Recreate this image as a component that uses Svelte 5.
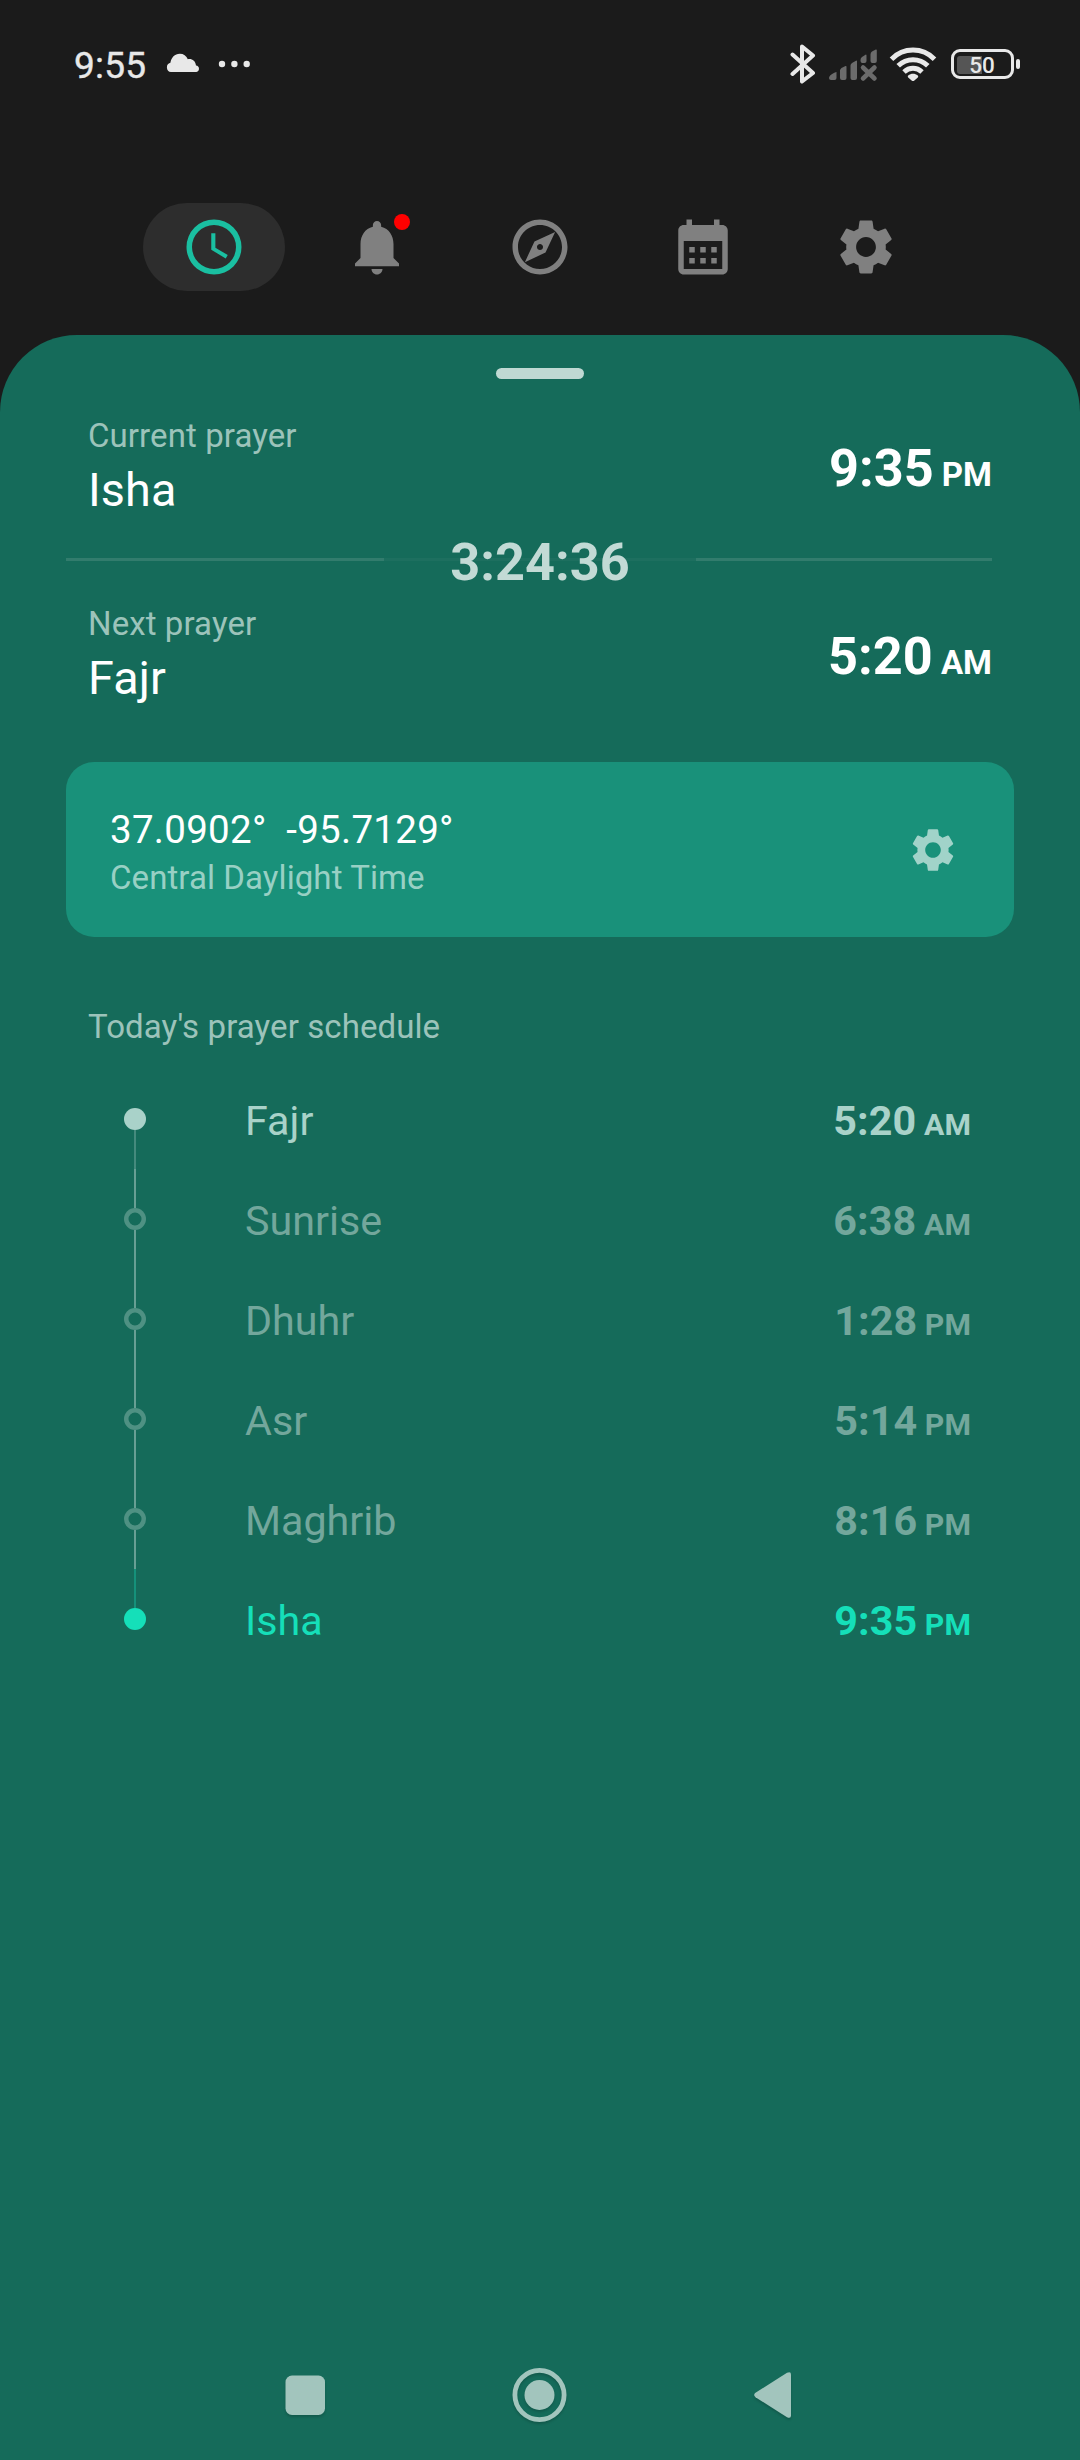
<script>
  const gear =
    'M19.14 12.94c.04-.3.06-.61.06-.94 0-.32-.02-.64-.07-.94l2.03-1.58c.18-.14.23-.41.12-.61l-1.92-3.32c-.12-.22-.37-.29-.59-.22l-2.39.96c-.5-.38-1.03-.7-1.62-.94L14.4 2.81c-.04-.24-.24-.41-.48-.41h-3.84c-.24 0-.43.17-.47.41L9.25 5.35C8.66 5.59 8.12 5.92 7.63 6.29L5.24 5.33c-.22-.08-.47 0-.59.22L2.74 8.87c-.12.21-.08.47.12.61l2.03 1.58C4.84 11.36 4.8 11.69 4.8 12s.02.64.07.94l-2.03 1.58c-.18.14-.23.41-.12.61l1.92 3.32c.12.22.37.29.59.22l2.39-.96c.5.38 1.03.7 1.62.94l.36 2.54c.05.24.24.41.48.41h3.84c.24 0 .44-.17.47-.41l.36-2.54c.59-.24 1.13-.56 1.62-.94l2.39.96c.22.08.47 0 .59-.22l1.92-3.32c.12-.22.07-.47-.12-.61l-2.01-1.58zM12 15.6c-1.98 0-3.6-1.62-3.6-3.6s1.62-3.6 3.6-3.6 3.6 1.62 3.6 3.6-1.62 3.6-3.6 3.6z';

  const tabs = [
    {
      id: 'times',
      active: true,
      icon: 'M12 20a8 8 0 0 0 8-8 8 8 0 0 0-8-8 8 8 0 0 0-8 8 8 8 0 0 0 8 8m0-18a10 10 0 0 1 10 10 10 10 0 0 1-10 10C6.47 22 2 17.5 2 12A10 10 0 0 1 12 2m.5 5v5.25l4.5 2.67-.75 1.23L11 13V7h1.5z'
    },
    {
      id: 'alerts',
      badge: true,
      icon: 'M12 22c1.1 0 2-.9 2-2h-4c0 1.1.89 2 2 2zm6-6v-5c0-3.07-1.64-5.64-4.5-6.32V4c0-.83-.67-1.5-1.5-1.5s-1.5.67-1.5 1.5v.68C7.63 5.36 6 7.92 6 11v5l-2 2v1h16v-1l-2-2z'
    },
    {
      id: 'qibla',
      icon: 'M12 2C6.48 2 2 6.48 2 12s4.48 10 10 10 10-4.48 10-10S17.52 2 12 2zm0 18c-4.41 0-8-3.59-8-8s3.59-8 8-8 8 3.59 8 8-3.59 8-8 8zm-5.5-2.5l7.51-3.49L17.5 6.5 9.99 9.99 6.5 17.5zm5.5-6.6c.61 0 1.1.49 1.1 1.1s-.49 1.1-1.1 1.1-1.1-.49-1.1-1.1.49-1.1 1.1-1.1z'
    },
    {
      id: 'calendar',
      icon: 'M19 4h-1V2h-2v2H8V2H6v2H5c-1.11 0-1.99.9-1.99 2L3 20c0 1.1.89 2 2 2h14c1.1 0 2-.9 2-2V6c0-1.1-.9-2-2-2zm0 16H5V9.8h14V20zM9 14H7v-2h2v2zm4 0h-2v-2h2v2zm4 0h-2v-2h2v2zm-8 4H7v-2h2v2zm4 0h-2v-2h2v2zm4 0h-2v-2h2v2z'
    },
    { id: 'settings', icon: gear }
  ];

  const summary = {
    current: { label: 'Current prayer', name: 'Isha', time: '9:35', period: 'PM' },
    next: { label: 'Next prayer', name: 'Fajr', time: '5:20', period: 'AM' }
  };

  const schedule = [
    { name: 'Fajr', time: '5:20', period: 'AM', state: 'next' },
    { name: 'Sunrise', time: '6:38', period: 'AM', state: 'idle' },
    { name: 'Dhuhr', time: '1:28', period: 'PM', state: 'idle' },
    { name: 'Asr', time: '5:14', period: 'PM', state: 'idle' },
    { name: 'Maghrib', time: '8:16', period: 'PM', state: 'idle' },
    { name: 'Isha', time: '9:35', period: 'PM', state: 'current' }
  ];
</script>

{#snippet prayer(p)}
  <div class="prayer">
    <div class="prayer-text">
      <span class="label">{p.label}</span>
      <span class="prayer-name">{p.name}</span>
    </div>
    <div class="prayer-time">{p.time}<small>&nbsp;{p.period}</small></div>
  </div>
{/snippet}

<div class="screen">
  <header class="status">
    <div class="status-left">
      <span class="clock">9:55</span>
      <svg class="cloud" width="34" height="20" viewBox="0 0 34 20">
        <path d="M5 19a4.7 4.7 0 0 1-.6-9.2C5.100 4.500 8.800.7 13.800.7c3.700 0 6.700 2 8 5.600 4-.9 7.700 1.600 8.200 6.200A3.300 3.300 0 0 1 30.400 19z" />
      </svg>
      <svg class="more" width="32" height="8" viewBox="0 0 32 8">
        <circle cx="4" cy="4" r="3.200" /><circle cx="16.400" cy="4" r="3.200" /><circle cx="28.700" cy="4" r="3.200" />
      </svg>
    </div>
    <div class="status-right">
      <svg width="26" height="40" viewBox="0 0 26 40">
        <path class="stroke" d="M2.500 10.500 23 29 12 37.500V2.500L23 11.500 2.500 30" />
      </svg>
      <svg class="signal" width="50" height="34" viewBox="0 0 50 34">
        <path d="M1 30.500c0-3 3-5 7.500-6.500v6q0 2-2 2h-3.500q-2 0-2-2zM12 22.500q0-1.500 1.500-2.500l4-2q1-.4 1 .8V30q0 2-2 2h-2.500q-2 0-2-2zM22.500 17.500q0-1.500 1.500-2.500l4-2.300q1-.4 1 .8V30q0 2-2 2h-2.500q-2 0-2-2zM32.500 12q0-2 1.500-3l3.500-2.300q1-.4 1 .8V13q0 2-2 2h-2q-2 0-2-2zM42.500 6.500q0-2 1.500-3l3.800-2q1-.4 1 .8V13q0 2-2 2h-2.300q-2 0-2-2z" />
        <path class="cross" d="M35 19.500 46.500 30.500M46.500 19.500 35 30.500" />
      </svg>
      <svg class="wifi" width="48" height="36" viewBox="0 0 48 36">
        <path class="arc" d="M2.500 13.200C14.500 1 33.500 1 45.500 13.200M9.200 19.800c8.400-8.200 21.200-8.200 29.600 0M15 26c5.300-4.900 12.700-4.900 18 0" />
        <path d="M19.200 29.500c2.800-2.200 6.800-2.200 9.600 0 .6.600.5 1.400 0 2l-3.400 3q-1.400 1-2.800 0l-3.400-3c-.5-.6-.6-1.400 0-2z" />
      </svg>
      <div class="battery">
        <span class="level"></span>
        <span class="percent">50</span>
      </div>
      <span class="battery-tip"></span>
    </div>
  </header>

  <nav class="tabs">
    {#each tabs as tab (tab.id)}
      <div class="tab" class:active={tab.active}>
        <svg width="66" height="66" viewBox="0 0 24 24"><path d={tab.icon} /></svg>
        {#if tab.badge}<span class="badge"></span>{/if}
      </div>
    {/each}
  </nav>

  <main class="sheet">
    <div class="handle"></div>

    <section class="summary">
      {@render prayer(summary.current)}
      <div class="divider">
        <span class="rule left"></span>
        <span class="countdown">3:24:36</span>
        <span class="rule right"></span>
      </div>
      {@render prayer(summary.next)}
    </section>

    <section class="location">
      <div class="location-text">
        <span class="coords">37.0902°&nbsp; -95.7129°</span>
        <span class="zone">Central Daylight Time</span>
      </div>
      <svg width="52" height="52" viewBox="0 0 24 24"><path d={gear} /></svg>
    </section>

    <h2>Today's prayer schedule</h2>
    <ul>
      {#each schedule as item (item.name)}
        <li class={item.state}>
          <span class="rail"><i class="line"></i><i class="dot"></i><i class="line"></i></span>
          <span class="name">{item.name}</span>
          <span class="time">{item.time}<small>&nbsp;{item.period}</small></span>
        </li>
      {/each}
    </ul>

    <footer>
      <svg width="594" height="60" viewBox="0 0 594 60">
        <rect x="42.500" y="10.500" width="39.500" height="39.500" rx="6.500" />
        <circle class="ring" cx="296.500" cy="30" r="24.600" />
        <circle cx="296.500" cy="30" r="15" />
        <path d="M512.500 27.800 544 7.800Q548 6 548 9.500V50.500Q548 54 544 52.200L512.500 32.200Q509.800 30 512.500 27.800z" />
      </svg>
    </footer>
  </main>
</div>

<style>
  :global(body) {
    margin: 0;
    background: #1b1b1b;
  }

  .screen {
    width: 1080px;
    height: 2460px;
    display: flex;
    flex-direction: column;
    overflow: hidden;
    background: #1b1b1b;
    font-family: Roboto, 'Noto Sans', sans-serif;
    color: #fff;
  }

  svg {
    display: block;
    flex: none;
    fill: currentColor;
  }

  .status {
    height: 128px;
    padding: 0 60px 0 74px;
    display: flex;
    justify-content: space-between;
    align-items: center;
    color: #e8e8e8;
  }

  .status-left,
  .status-right {
    display: flex;
    align-items: center;
  }

  .clock {
    width: 92px;
    font-size: 37px;
    font-weight: 400;
    line-height: 44px;
    letter-spacing: 0.2px;
    padding-top: 3px;
    -webkit-text-stroke: 0.4px currentColor;
  }

  .cloud {
    margin-top: -3px;
  }

  .more {
    margin-left: 18px;
  }

  .stroke {
    fill: none;
    stroke: currentColor;
    stroke-width: 4;
    stroke-linecap: round;
    stroke-linejoin: round;
  }

  .signal {
    margin-left: 12px;
    margin-top: 2px;
    color: #6b6b6b;
  }

  .cross {
    stroke: currentColor;
    stroke-width: 4.5;
    stroke-linecap: round;
  }

  .wifi {
    margin-left: 11px;
  }

  .arc {
    fill: none;
    stroke: currentColor;
    stroke-width: 5;
  }

  .battery {
    box-sizing: border-box;
    width: 63px;
    height: 30px;
    margin-left: 14px;
    padding: 3px;
    display: grid;
    align-items: center;
    border: 3px solid currentColor;
    border-radius: 9px;
  }

  .level,
  .percent {
    grid-area: 1 / 1;
  }

  .level {
    width: 25px;
    height: 18px;
    border-radius: 3px 0 0 3px;
    background: #555;
  }

  .percent {
    padding: 1px 1px 0 0;
    font-size: 22.5px;
    font-weight: 500;
    line-height: 18px;
    text-align: center;
  }

  .battery-tip {
    width: 4px;
    height: 10px;
    margin-left: 2px;
    border-radius: 2px;
    background: currentColor;
  }

  .tabs {
    height: 88px;
    margin: 75px 0 44px;
    display: flex;
    justify-content: center;
    gap: 21px;
  }

  .tab {
    position: relative;
    width: 142px;
    display: grid;
    place-items: center;
    border-radius: 44px;
    color: #808080;
  }

  .tab.active {
    background: #2d2d2d;
    color: #1abfa1;
  }

  .badge {
    position: absolute;
    top: 11px;
    left: 88px;
    width: 16px;
    height: 16px;
    border-radius: 50%;
    background: #f00;
  }

  .sheet {
    flex: 1;
    display: flex;
    flex-direction: column;
    border-radius: 77px 77px 0 0;
    background: #156b5a;
  }

  .handle {
    width: 88px;
    height: 11px;
    margin: 33px auto 37px;
    border-radius: 5.5px;
    background: #bfd9d3;
  }

  .summary {
    padding: 0 88px 0 66px;
  }

  .prayer {
    padding-left: 22px;
    display: flex;
    justify-content: space-between;
    align-items: center;
  }

  .prayer-text {
    display: flex;
    flex-direction: column;
    gap: 6px;
  }

  .label {
    font-size: 33px;
    line-height: 40px;
    letter-spacing: 0.09px;
    color: #9cc3ba;
  }

  .prayer-name {
    font-size: 46.75px;
    line-height: 56px;
    letter-spacing: 0.1px;
  }

  .prayer-time {
    padding-top: 4px;
    font-size: 52.25px;
    font-weight: 700;
    line-height: 62px;
  }

  .prayer-time small {
    font-size: 33px;
    line-height: 1;
  }

  .divider {
    height: 62px;
    margin: 14px 0 10px;
    display: flex;
    align-items: flex-start;
  }

  .rule {
    height: 3px;
    margin-top: 26px;
    background: #327c6d;
  }

  .rule.left {
    width: 318px;
  }

  .rule.right {
    flex: 1;
  }

  .countdown {
    width: 312px;
    text-align: center;
    font-size: 52.25px;
    font-weight: 700;
    line-height: 62px;
    color: #c2dad5;
    background: linear-gradient(#1d6f5f, #1d6f5f) 0 26px / 100% 3px no-repeat;
  }

  .location {
    box-sizing: border-box;
    height: 175px;
    margin: 56px 66px 0;
    padding: 0 55px 0 44px;
    display: flex;
    justify-content: space-between;
    align-items: center;
    border-radius: 28px;
    background: #19917a;
    color: #a1d3c9;
  }

  .location-text {
    padding-top: 6px;
    display: flex;
    flex-direction: column;
    gap: 5px;
  }

  .coords {
    font-size: 38.5px;
    line-height: 46px;
    letter-spacing: 0.28px;
    color: #fff;
  }

  .zone {
    font-size: 33px;
    line-height: 40px;
    letter-spacing: 0.08px;
    color: #98d0c4;
  }

  h2 {
    margin: 70px 88px 22px;
    font-size: 33px;
    font-weight: 400;
    line-height: 40px;
    letter-spacing: 0.09px;
    color: #9cc3ba;
  }

  ul {
    list-style: none;
    margin: 0;
    padding: 0 109px 0 124px;
  }

  li {
    height: 100px;
    display: flex;
    align-items: center;
    font-size: 41.25px;
    line-height: 50px;
    color: #73a79c;
  }

  .rail {
    align-self: stretch;
    width: 22px;
    display: flex;
    flex-direction: column;
    align-items: center;
  }

  .line {
    flex: 1;
    width: 2px;
    background: #679f94;
  }

  .dot {
    width: 22px;
    height: 22px;
    border-radius: 50%;
    box-shadow: inset 0 0 0 4.5px #4f9183;
  }

  .name {
    flex: 1;
    padding: 4px 0 0 99px;
  }

  .time {
    padding-top: 4px;
    font-weight: 700;
    letter-spacing: 0.1px;
  }

  .time small {
    font-size: 30.25px;
    line-height: 1;
  }

  .next {
    color: #a9d2c9;
  }

  .current {
    color: #15dfb9;
  }

  .next .dot,
  .current .dot {
    box-shadow: none;
    background: currentColor;
  }

  .next .line {
    background: #458a7d;
  }

  .current .line {
    background: #15917a;
  }

  li:first-child .line:first-child,
  li:last-child .line:last-child {
    visibility: hidden;
  }

  footer {
    height: 130px;
    margin-top: auto;
    display: grid;
    place-items: center;
    color: #a2c5bd;
  }

  footer svg {
    filter: drop-shadow(0 2px 1px rgba(0, 0, 0, 0.16));
  }

  .ring {
    fill: none;
    stroke: currentColor;
    stroke-width: 4.8;
  }
</style>
